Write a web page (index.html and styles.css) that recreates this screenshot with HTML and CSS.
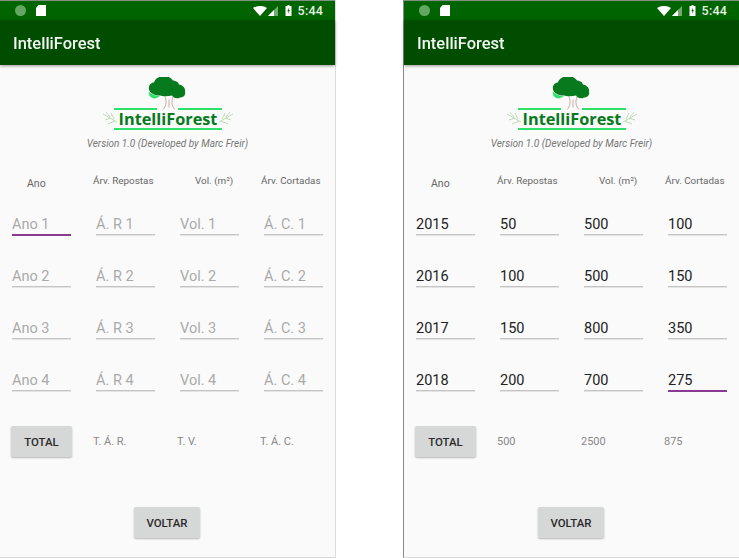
FILE: index.html
```html
<!DOCTYPE html>
<html lang="pt">
<head>
<meta charset="utf-8">
<title>IntelliForest</title>
<link rel="stylesheet" href="styles.css">
</head>
<body>
<main class="screens">
  <section class="phone phone-left">
    <div class="status">
      <span class="status-dot"></span>
      <svg class="sd" viewBox="0 0 10 11"><path d="M2.5 0H10V11H0V3Z" fill="#fff"/></svg>
      <span class="status-spacer"></span>
      <svg class="wifi" viewBox="0 0 14 10"><path d="M0 2 C4 -.7 10 -.7 14 2 L7 10Z" fill="#fff"/></svg>
      <svg class="signal" viewBox="0 0 10 10"><path d="M10 0V10H0Z" fill="#fff" fill-opacity=".45"/><path d="M6 4V10H0Z" fill="#fff"/></svg>
      <svg class="battery" viewBox="0 0 6 11"><path d="M2 0H4V1H6V11H0V1H2Z" fill="#fff"/><path d="M3.4 2.5 1.8 6.2H3L2.6 9 4.4 5H3.2Z" fill="#0a6a0a"/></svg>
      <span class="clock">5:44</span>
    </div>
    <header class="appbar">IntelliForest</header>
    <div class="content">
      <div class="brand">
        <svg class="logo" viewBox="0 0 132 54">
          <g transform="translate(40 -1.5)">
            <path d="M23 21 C25 27 24 31 21 34 M31 21 C29 27 30 31 33 34 M27 24 L27 32" fill="none" stroke="#cfa8a2" stroke-width="1"/>
            <path d="M7 16 C9 19 13 20 18 21 L13 23 C9 23 6 20 7 16Z" fill="#2fe06a"/>
            <path d="M7 14 C6 9 10 7 12 7 C13 3 17 1 21 1 C25 0 29 2 31 5 C33 5 36 6 37 9 C40 9 44 13 43 16 C44 20 41 22 38 22 C35 24 31 22 30 20 C26 21 21 21 18 20 C13 20 8 18 7 14Z" fill="#067a1c"/>
          </g>
          <rect x="12" y="31" width="43" height="2" fill="#2fe06a"/>
          <rect x="76" y="31" width="44" height="2" fill="#2fe06a"/>
          <rect x="12" y="51" width="108" height="2" fill="#2fe06a"/>
          <g fill="none" stroke="#b7d8b0" stroke-width=".9">
            <path d="M1 37 L15 45 M4 35 L8 40 M9 36 L12 42 M3 43 L9 41 M6 47 L13 44"/>
            <path d="M131 37 L117 45 M128 35 L124 40 M123 36 L120 42 M129 43 L123 41 M126 47 L119 44"/>
          </g>
          <text class="logo-text" x="66" y="48" text-anchor="middle">IntelliForest</text>
        </svg>
        <p class="version">Version 1.0 (Developed by Marc Freir)</p>
      </div>
      <div class="labels">
        <span class="label label-ano">Ano</span>
        <span class="label label-shift">Árv. Repostas</span>
        <span class="label label-vol">Vol. (m³)</span>
        <span class="label label-shift">Árv. Cortadas</span>
      </div>
      <div class="grid">
        <span class="field hint active">Ano 1</span><span class="field hint">Á. R 1</span><span class="field hint">Vol. 1</span><span class="field hint">Á. C. 1</span>
        <span class="field hint">Ano 2</span><span class="field hint">Á. R 2</span><span class="field hint">Vol. 2</span><span class="field hint">Á. C. 2</span>
        <span class="field hint">Ano 3</span><span class="field hint">Á. R 3</span><span class="field hint">Vol. 3</span><span class="field hint">Á. C. 3</span>
        <span class="field hint">Ano 4</span><span class="field hint">Á. R 4</span><span class="field hint">Vol. 4</span><span class="field hint">Á. C. 4</span>
      </div>
      <div class="totals">
        <button class="btn btn-total">TOTAL</button>
        <span class="total-value tv-a">T. Á. R.</span>
        <span class="total-value tv-b">T. V.</span>
        <span class="total-value tv-c">T. Á. C.</span>
      </div>
      <div class="footer"><button class="btn btn-back">VOLTAR</button></div>
    </div>
  </section>

  <section class="phone phone-right">
    <div class="status">
      <span class="status-dot"></span>
      <svg class="sd" viewBox="0 0 10 11"><path d="M2.5 0H10V11H0V3Z" fill="#fff"/></svg>
      <span class="status-spacer"></span>
      <svg class="wifi" viewBox="0 0 14 10"><path d="M0 2 C4 -.7 10 -.7 14 2 L7 10Z" fill="#fff"/></svg>
      <svg class="signal" viewBox="0 0 10 10"><path d="M10 0V10H0Z" fill="#fff" fill-opacity=".45"/><path d="M6 4V10H0Z" fill="#fff"/></svg>
      <svg class="battery" viewBox="0 0 6 11"><path d="M2 0H4V1H6V11H0V1H2Z" fill="#fff"/><path d="M3.4 2.5 1.8 6.2H3L2.6 9 4.4 5H3.2Z" fill="#0a6a0a"/></svg>
      <span class="clock">5:44</span>
    </div>
    <header class="appbar">IntelliForest</header>
    <div class="content">
      <div class="brand">
        <svg class="logo" viewBox="0 0 132 54">
          <g transform="translate(40 -1.5)">
            <path d="M23 21 C25 27 24 31 21 34 M31 21 C29 27 30 31 33 34 M27 24 L27 32" fill="none" stroke="#cfa8a2" stroke-width="1"/>
            <path d="M7 16 C9 19 13 20 18 21 L13 23 C9 23 6 20 7 16Z" fill="#2fe06a"/>
            <path d="M7 14 C6 9 10 7 12 7 C13 3 17 1 21 1 C25 0 29 2 31 5 C33 5 36 6 37 9 C40 9 44 13 43 16 C44 20 41 22 38 22 C35 24 31 22 30 20 C26 21 21 21 18 20 C13 20 8 18 7 14Z" fill="#067a1c"/>
          </g>
          <rect x="12" y="31" width="43" height="2" fill="#2fe06a"/>
          <rect x="76" y="31" width="44" height="2" fill="#2fe06a"/>
          <rect x="12" y="51" width="108" height="2" fill="#2fe06a"/>
          <g fill="none" stroke="#b7d8b0" stroke-width=".9">
            <path d="M1 37 L15 45 M4 35 L8 40 M9 36 L12 42 M3 43 L9 41 M6 47 L13 44"/>
            <path d="M131 37 L117 45 M128 35 L124 40 M123 36 L120 42 M129 43 L123 41 M126 47 L119 44"/>
          </g>
          <text class="logo-text" x="66" y="48" text-anchor="middle">IntelliForest</text>
        </svg>
        <p class="version">Version 1.0 (Developed by Marc Freir)</p>
      </div>
      <div class="labels">
        <span class="label label-ano">Ano</span>
        <span class="label label-shift">Árv. Repostas</span>
        <span class="label label-vol">Vol. (m³)</span>
        <span class="label label-shift">Árv. Cortadas</span>
      </div>
      <div class="grid">
        <span class="field">2015</span><span class="field">50</span><span class="field">500</span><span class="field">100</span>
        <span class="field">2016</span><span class="field">100</span><span class="field">500</span><span class="field">150</span>
        <span class="field">2017</span><span class="field">150</span><span class="field">800</span><span class="field">350</span>
        <span class="field">2018</span><span class="field">200</span><span class="field">700</span><span class="field active">275</span>
      </div>
      <div class="totals">
        <button class="btn btn-total">TOTAL</button>
        <span class="total-value tv-a">500</span>
        <span class="total-value tv-b">2500</span>
        <span class="total-value tv-c">875</span>
      </div>
      <div class="footer"><button class="btn btn-back">VOLTAR</button></div>
    </div>
  </section>
</main>
</body>
</html>
```
FILE: styles.css
```css
* { box-sizing: border-box; }
html, body { margin: 0; padding: 0; }
body { background: #fff; width: 739px; height: 558px; overflow: hidden; font-family: Roboto, sans-serif; }
.screens { display: flex; justify-content: space-between; height: 558px; }
.phone { width: 336px; height: 558px; display: flex; flex-direction: column; background: #fafafa; border-bottom: 1px solid #d8d8d8; filter: blur(.35px); }
.phone-left { border-right: 1px solid #dcdcdc; }
.phone-right { border-left: 1px solid #8a8a8a; }

.status { height: 20px; background: #006400; border-top: 1px solid #7f927f; display: flex; align-items: center; padding: 0 12px 0 15px; color: #e6f0e6; }
.status-dot { width: 11px; height: 11px; border-radius: 50%; background: #63a763; }
.sd { width: 10px; height: 11px; margin-left: 10px; }
.status-spacer { flex: 1; }
.wifi { width: 14px; height: 10px; }
.signal { width: 10px; height: 10px; margin-left: 1px; }
.battery { width: 7px; height: 11px; margin-left: 7px; }
.clock { font-size: 12.5px; font-weight: 500; margin-left: 6px; letter-spacing: .2px; }

.appbar { height: 45px; background: #004d00; color: #f2f6f2; font-size: 16.5px; font-weight: 500; padding: 1px 0 0 13px; display: flex; align-items: center; box-shadow: 0 1px 3px rgba(0,0,0,.4); position: relative; }

.content { flex: 1; padding: 0 12px; display: flex; flex-direction: column; }
.brand { display: flex; flex-direction: column; align-items: center; padding-top: 12px; }
.logo { width: 132px; height: 54px; display: block; }
.logo-text { font: 700 16.3px "Open Sans", sans-serif; fill: #067a1c; }
.version { margin: 7px 0 0; font-size: 10px; font-style: italic; color: #777; line-height: 12px; }

.labels { display: grid; grid-template-columns: repeat(4, 59px); column-gap: 25px; margin-top: 24px; height: 16px; }
.label { font-size: 9.9px; color: #666; white-space: nowrap; line-height: 14px; }
.label-ano { font-size: 10.5px; padding: 3px 0 0 15px; }
.label-shift { margin-left: -3px; }
.label-vol { padding-left: 15px; }

.grid { display: grid; grid-template-columns: repeat(4, 59px); column-gap: 25px; grid-auto-rows: 36px; row-gap: 16px; margin-top: 16px; }
.field { font-size: 14.5px; color: #222; border-bottom: 1px solid #c4c4c4; height: 29px; align-self: start; padding: 10px 0 0; line-height: 18px; box-shadow: 0 1px 0 #e4e4e4; }
.hint { color: #aaa; }
.active { border-bottom: 2px solid #8b3a92; height: 30px; box-shadow: none; }

.totals { display: flex; align-items: center; margin-top: 28px; height: 31px; }
.btn { border: 0; border-radius: 2px; background: #d6d7d7; color: #2a2a2a; font: 500 11.4px Roboto, sans-serif; height: 31px; box-shadow: 0 1px 2px rgba(0,0,0,.28); padding: 0; }
.btn-total { width: 61px; margin-left: -1px; }
.total-value { font-size: 11px; color: #888; white-space: nowrap; }
.tv-a { margin-left: 21px; width: 84px; }
.tv-b { width: 83px; }
.tv-c { flex: 1; }
.footer { display: flex; justify-content: center; margin-top: 50px; }
.btn-back { width: 66px; margin-left: -1px; }
```
